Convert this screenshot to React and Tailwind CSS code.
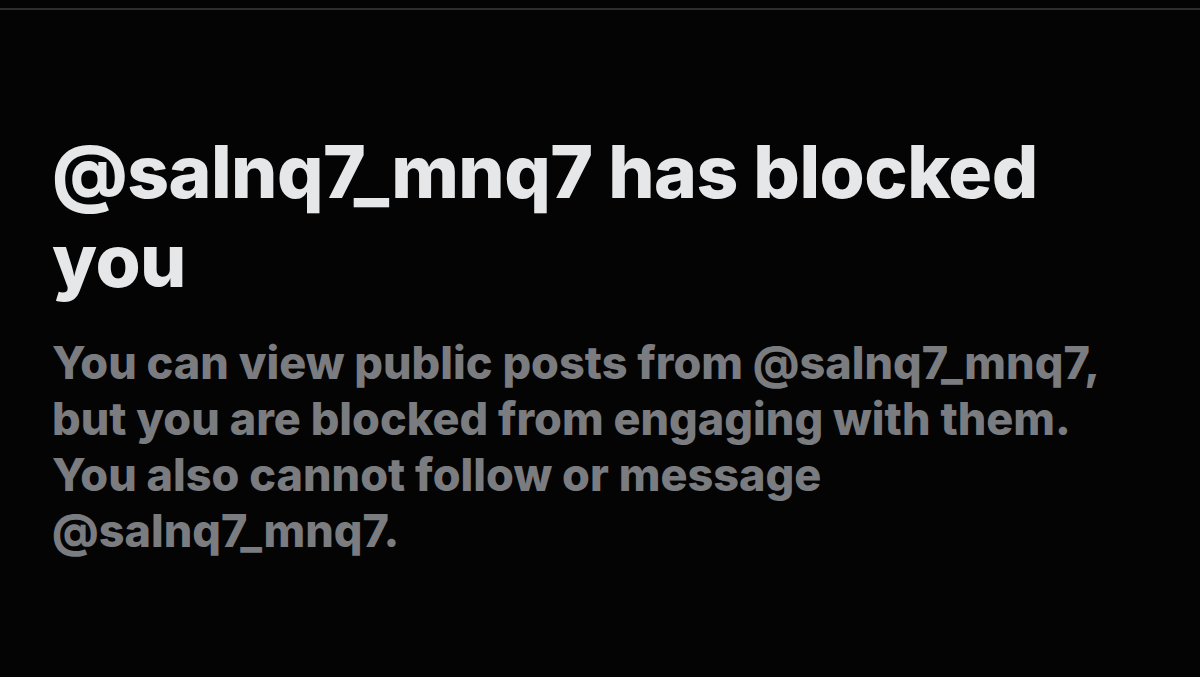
export default function App() {
  return (
    <div className="w-[1200px] h-[677px] bg-[#040404] overflow-hidden flex flex-col" style={{ fontFamily: 'Inter, "Liberation Sans", sans-serif' }}>
      <div className="h-[8px]" />
      <div className="h-[2px] bg-[#2e2e2e]" />
      <div className="pl-[52px] pt-[117px]">
        <h1 className="text-[73px] leading-[89px] font-extrabold text-[#e6e7e8] tracking-[-0.5px]">
          @salnq7_mnq7 has blocked
          <br />
          you
        </h1>
        <p className="mt-[30px] text-[45px] leading-[56px] font-extrabold text-[#7a7c80]">
          You can view public posts from @salnq7_mnq7,
          <br />
          but you are blocked from engaging with them.
          <br />
          You also cannot follow or message
          <br />
          @salnq7_mnq7.
        </p>
      </div>
    </div>
  );
}
